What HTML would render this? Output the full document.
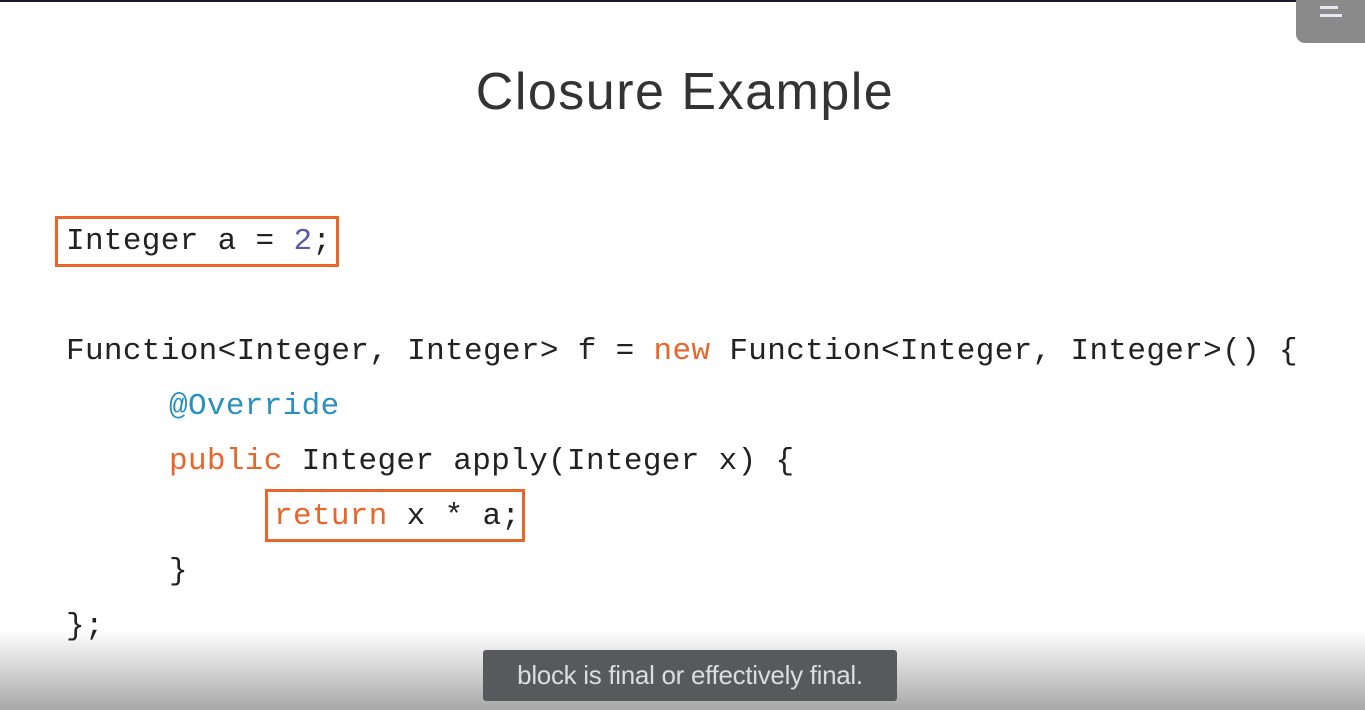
<!DOCTYPE html>
<html><head><style>
body{margin:0;width:1365px;height:710px;overflow:hidden;background:#fff;position:relative;font-family:"Liberation Sans",sans-serif}
.topline{position:absolute;left:0;top:0;width:1365px;height:2px;background:#1a1a2a}
h1{position:absolute;left:0;width:1370px;top:62px;margin:0;text-align:center;font-weight:normal;font-size:52px;color:#333;letter-spacing:1.5px}
.c{position:absolute;font-family:"Liberation Mono",monospace;font-size:31px;letter-spacing:0.35px;color:#222;white-space:pre;line-height:40px}
.k{color:#e8662a}.a{color:#2a90bf}.n{color:#5a5aa8}
.box{position:absolute;border:3px solid #e8662a;box-sizing:border-box}
.fade{position:absolute;left:0;top:630px;width:1365px;height:80px;background:linear-gradient(#fff,#a8a8a8)}
.cap{position:absolute;left:483px;top:650px;width:414px;height:51px;background:#58595c;border-radius:3px;color:#ddd;font-size:26px;text-align:center;line-height:50px;letter-spacing:-0.3px}
.menu{position:absolute;left:1296px;top:-5px;width:69px;height:48px;background:#8a8a8a;border-radius:0 0 0 9px}
.menu i{position:absolute;left:24px;height:3px;background:#e8e6f4}
</style></head><body>
<div class="topline"></div>
<div class="menu"><i style="top:11px;width:18px"></i><i style="top:19px;width:22px"></i></div>
<h1>Closure Example</h1>
<div class="box" style="left:55px;top:216px;width:284px;height:51px"></div>
<div class="c" style="left:66px;top:222px">Integer a = <span class="n">2</span>;</div>
<div class="c" style="left:66px;top:332px">Function&lt;Integer, Integer&gt; f = <span class="k">new</span> Function&lt;Integer, Integer&gt;() {</div>
<div class="c a" style="left:169px;top:387px">@Override</div>
<div class="c" style="left:169px;top:442px"><span class="k">public</span> Integer apply(Integer x) {</div>
<div class="box" style="left:265px;top:489px;width:260px;height:53px"></div>
<div class="c" style="left:274px;top:497px"><span class="k">return</span> x * a;</div>
<div class="c" style="left:169px;top:552px">}</div>
<div class="fade"></div>
<div class="c" style="left:66px;top:607px">};</div>
<div class="cap">block is final or effectively final.</div>
</body></html>
